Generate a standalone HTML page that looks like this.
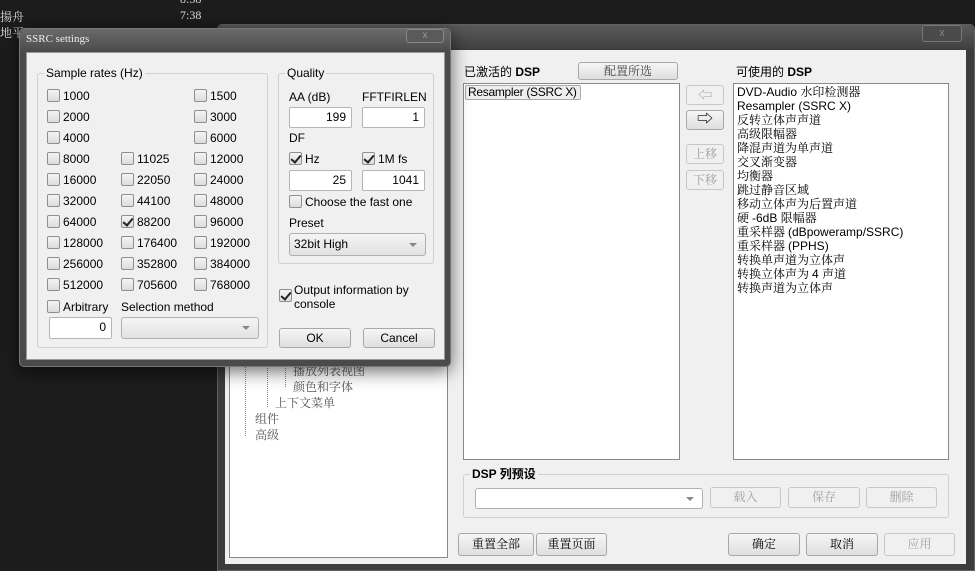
<!DOCTYPE html>
<html><head><meta charset="utf-8"><style>
*{margin:0;padding:0;box-sizing:border-box}
body{width:975px;height:571px;background:#1c1c1c;position:relative;overflow:hidden;font-family:"Liberation Sans","Noto Sans CJK SC",sans-serif;font-size:12px;color:#000}
.a{position:absolute;white-space:nowrap}
.t{position:absolute;white-space:nowrap;line-height:14px}
.cb{position:absolute;width:13px;height:13px;border:1px solid #8e8f8f;border-radius:2px;background:linear-gradient(#f4f4f4,#dcdcdc)}
.cb.on::after{content:"";position:absolute;left:3px;top:0px;width:4px;height:8px;border:solid #222;border-width:0 2px 2px 0;transform:rotate(40deg)}
.inp{position:absolute;background:#fff;border:1px solid #b5b5b5;border-radius:2px;text-align:right;padding-right:5px;line-height:18px}
.btn{position:absolute;border:1px solid #a8a8a8;border-radius:3px;background:linear-gradient(#f6f6f6,#dedede);text-align:center}
.btn.dis{color:#a0a0a0;background:#f0f0f0;border-color:#c8c8c8}
.grp{position:absolute;border:1px solid #d0d0d0;border-radius:3px}
.grp .lg{position:absolute;top:-8px;left:6px;background:#f0f0f0;padding:0 2px;line-height:14px}
.sel{position:absolute;border:1px solid #b0b0b0;border-radius:3px;background:linear-gradient(#f4f4f4,#e2e2e2)}
.sel::after{content:"";position:absolute;right:8px;top:50%;margin-top:-2px;border:4px solid transparent;border-top:4px solid #888}
.zh{font-family:"Liberation Serif","Noto Serif CJK SC",serif}
</style></head><body>
<div class="a zh" style="left:180px;top:-8px;color:#ccc">8:38</div>
<div class="a zh" style="left:0;top:8px;color:#ddd">揚舟</div>
<div class="a zh" style="left:180px;top:8px;color:#ddd">7:38</div>
<div class="a zh" style="left:0;top:24px;color:#ddd">地平</div>

<div class="a" style="left:217px;top:24px;width:758px;height:547px;background:#3c3c3c;border:1px solid #606060;border-radius:5px 5px 0 0"></div>
<div class="a" style="left:218px;top:25px;width:756px;height:24px;background:linear-gradient(#5a5a5a,#404040);border-radius:5px 5px 0 0"></div>
<div class="a" style="left:922px;top:25px;width:40px;height:17px;border:1px solid #777;border-radius:3px;background:#4a4a4a;color:#888;text-align:center;font-size:11px;line-height:15px">x</div>
<div class="a" style="left:225px;top:50px;width:741px;height:514px;background:#f0f0f0"></div>
<div class="a" style="left:229px;top:52px;width:219px;height:506px;background:#fff;border:1px solid #888"></div>
<div class="a" style="left:267px;top:360px;border-left:1px dotted #888;height:47px"></div>
<div class="a" style="left:285px;top:360px;border-left:1px dotted #888;height:27px"></div>
<div class="a" style="left:245px;top:360px;border-left:1px dotted #888;height:76px"></div>
<div class="t zh" style="left:293px;top:364px;color:#555">播放列表视图</div>
<div class="t zh" style="left:293px;top:380px;color:#555">颜色和字体</div>
<div class="t zh" style="left:275px;top:396px;color:#555">上下文菜单</div>
<div class="t zh" style="left:255px;top:412px;color:#555">组件</div>
<div class="t zh" style="left:255px;top:428px;color:#555">高级</div>

<div class="t" style="left:464px;top:65px">已激活的 <b>DSP</b></div>
<div class="btn zh" style="left:578px;top:62px;width:100px;height:18px;line-height:16px;color:#444">配置所选</div>
<div class="a" style="left:463px;top:83px;width:217px;height:377px;background:#fff;border:1px solid #888"></div>
<div class="a" style="left:465px;top:85px;height:15px;border:1px solid #aaa;border-radius:2px;background:#eee;line-height:13px;padding:0 3px 0 2px;letter-spacing:-0.3px">Resampler (SSRC X)</div>
<div class="btn dis" style="left:686px;top:85px;width:38px;height:20px;line-height:18px;font-size:14px">⇦</div>
<div class="btn" style="left:686px;top:110px;width:38px;height:20px;line-height:17px;font-size:16px">⇨</div>
<div class="btn dis zh" style="left:686px;top:144px;width:38px;height:20px;line-height:18px">上移</div>
<div class="btn dis zh" style="left:686px;top:170px;width:38px;height:20px;line-height:18px">下移</div>

<div class="t" style="left:736px;top:65px">可使用的 <b>DSP</b></div>
<div class="a" style="left:733px;top:83px;width:216px;height:377px;background:#fff;border:1px solid #888"></div>
<div class="a" style="left:737px;top:85px;line-height:14px" >DVD-Audio <span class="zh">水印检测器</span><br>Resampler (SSRC X)<br><span class="zh">反转立体声声道<br>高级限幅器<br>降混声道为单声道<br>交叉渐变器<br>均衡器<br>跳过静音区域<br>移动立体声为后置声道<br>硬 </span>-6dB <span class="zh">限幅器<br>重采样器 </span>(dBpoweramp/SSRC)<br><span class="zh">重采样器 </span>(PPHS)<br><span class="zh">转换单声道为立体声<br>转换立体声为 </span>4 <span class="zh">声道<br>转换声道为立体声</span></div>

<div class="grp" style="left:463px;top:474px;width:486px;height:44px"><div class="lg" style="font-weight:bold">DSP 列预设</div></div>
<div class="sel" style="left:475px;top:488px;width:228px;height:21px;background:#fff"></div>
<div class="btn dis zh" style="left:710px;top:487px;width:71px;height:21px;line-height:19px">载入</div>
<div class="btn dis zh" style="left:788px;top:487px;width:72px;height:21px;line-height:19px">保存</div>
<div class="btn dis zh" style="left:866px;top:487px;width:71px;height:21px;line-height:19px">删除</div>

<div class="btn zh" style="left:458px;top:533px;width:76px;height:23px;line-height:21px">重置全部</div>
<div class="btn zh" style="left:536px;top:533px;width:71px;height:23px;line-height:21px">重置页面</div>
<div class="btn zh" style="left:728px;top:533px;width:72px;height:23px;line-height:21px">确定</div>
<div class="btn zh" style="left:806px;top:533px;width:72px;height:23px;line-height:21px">取消</div>
<div class="btn dis zh" style="left:884px;top:533px;width:71px;height:23px;line-height:21px">应用</div>

<div class="a" style="left:19px;top:28px;width:432px;height:339px;background:#4a4a4a;border:1px solid #777;border-radius:5px;box-shadow:0 4px 18px rgba(0,0,0,.6)"></div>
<div class="a" style="left:20px;top:29px;width:430px;height:22px;background:linear-gradient(#6a6a6a,#4c4c4c);border-radius:5px 5px 0 0"></div>
<div class="a zh" style="left:26px;top:33px;color:#eee;font-size:11px">SSRC settings</div>
<div class="a" style="left:406px;top:29px;width:38px;height:14px;border:1px solid #888;border-radius:3px;background:#5a5a5a;color:#999;text-align:center;font-size:10px;line-height:12px">x</div>
<div class="a" style="left:26px;top:52px;width:419px;height:308px;background:#f0f0f0;border:1px solid #999"></div>

<div class="grp" style="left:37px;top:73px;width:231px;height:275px"><div class="lg">Sample rates (Hz)</div></div>
<div class="grp" style="left:278px;top:73px;width:156px;height:191px"><div class="lg">Quality</div></div>

<div id="rates"></div>
<script>
var rows=[["1000","","1500"],["2000","","3000"],["4000","","6000"],["8000","11025","12000"],["16000","22050","24000"],["32000","44100","48000"],["64000","88200","96000"],["128000","176400","192000"],["256000","352800","384000"],["512000","705600","768000"]];
var xs=[47,121,194],h="";
rows.forEach(function(r,i){var y=89+i*21;r.forEach(function(v,j){if(!v)return;h+='<div class="cb'+(v=="88200"?" on":"")+'" style="left:'+xs[j]+'px;top:'+y+'px"></div><div class="t" style="left:'+(xs[j]+16)+'px;top:'+y+'px">'+v+'</div>';});});
document.getElementById("rates").innerHTML=h;
</script>
<div class="cb" style="left:47px;top:300px"></div><div class="t" style="left:63px;top:300px">Arbitrary</div>
<div class="t" style="left:121px;top:300px">Selection method</div>
<div class="inp" style="left:49px;top:317px;width:63px;height:22px">0</div>
<div class="sel" style="left:121px;top:317px;width:138px;height:22px"></div>

<div class="t" style="left:289px;top:90px">AA (dB)</div>
<div class="t" style="left:362px;top:90px">FFTFIRLEN</div>
<div class="inp" style="left:289px;top:107px;width:63px;height:21px">199</div>
<div class="inp" style="left:362px;top:107px;width:63px;height:21px">1</div>
<div class="t" style="left:289px;top:131px">DF</div>
<div class="cb on" style="left:289px;top:152px"></div><div class="t" style="left:305px;top:152px">Hz</div>
<div class="cb on" style="left:362px;top:152px"></div><div class="t" style="left:378px;top:152px">1M fs</div>
<div class="inp" style="left:289px;top:170px;width:63px;height:21px">25</div>
<div class="inp" style="left:362px;top:170px;width:63px;height:21px">1041</div>
<div class="cb" style="left:289px;top:195px"></div><div class="t" style="left:305px;top:195px">Choose the fast one</div>
<div class="t" style="left:289px;top:216px">Preset</div>
<div class="sel" style="left:289px;top:233px;width:137px;height:23px;line-height:21px;padding-left:4px">32bit High</div>
<div class="cb on" style="left:279px;top:289px"></div>
<div class="t" style="left:294px;top:283px">Output information by<br>console</div>
<div class="btn" style="left:279px;top:328px;width:72px;height:20px;line-height:18px">OK</div>
<div class="btn" style="left:363px;top:328px;width:72px;height:20px;line-height:18px">Cancel</div>
</body></html>
